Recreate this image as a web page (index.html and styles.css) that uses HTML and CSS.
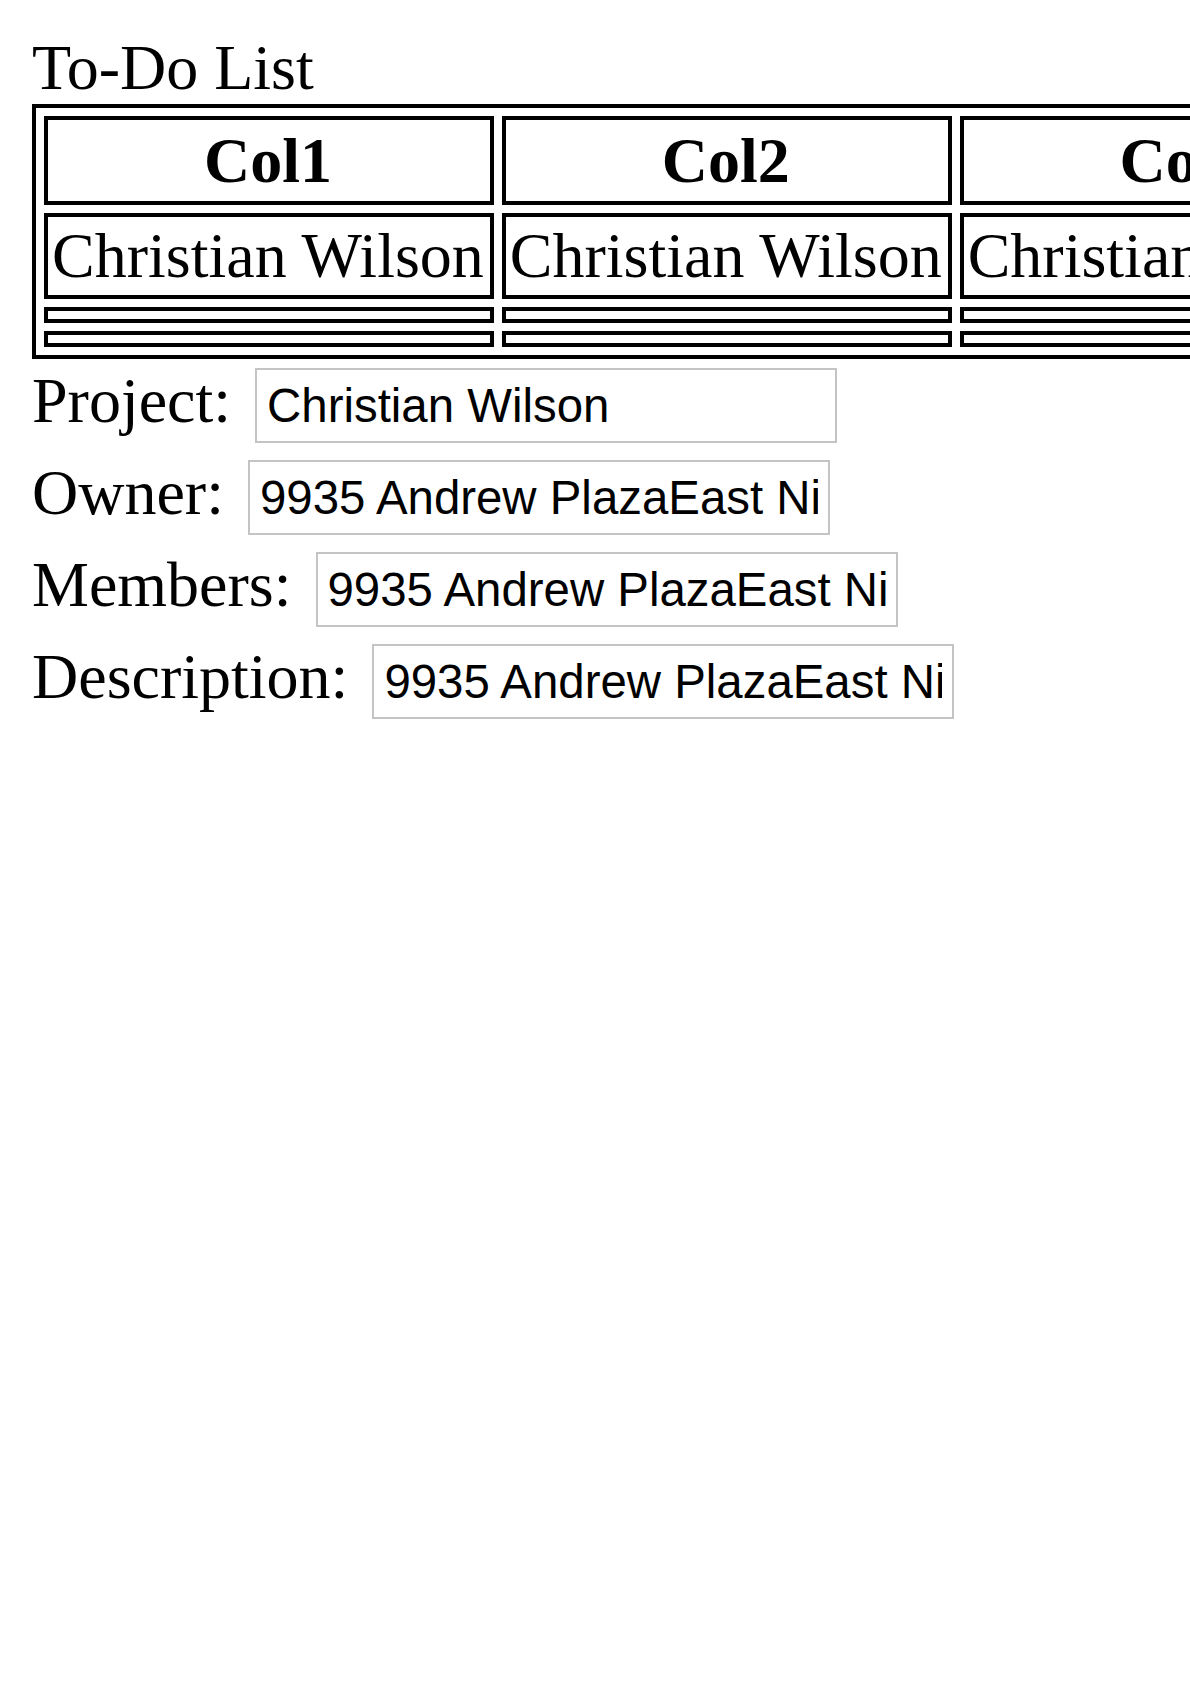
FILE: index.html
```html
<!DOCTYPE html>
<html lang="en">
<head>
<meta charset="utf-8">
<title>To-Do List</title>
<link rel="stylesheet" href="styles.css">
</head>
<body>
<div class="page">
  <div class="title">To-Do List</div>
  <table class="grid">
    <tr>
      <th>Col1</th>
      <th>Col2</th>
      <th>Col3</th>
    </tr>
    <tr>
      <td>Christian Wilson</td>
      <td>Christian Wilson</td>
      <td>Christian Wilson</td>
    </tr>
    <tr class="empty">
      <td></td>
      <td></td>
      <td></td>
    </tr>
    <tr class="empty">
      <td></td>
      <td></td>
      <td></td>
    </tr>
  </table>
  <div class="row">
    <label class="lbl" for="project">Project:</label>
    <input class="field" id="project" type="text" value="Christian Wilson">
  </div>
  <div class="row">
    <label class="lbl" for="owner">Owner:</label>
    <input class="field" id="owner" type="text" value="9935 Andrew PlazaEast Nicoleview, WA 20435">
  </div>
  <div class="row">
    <label class="lbl" for="members">Members:</label>
    <input class="field" id="members" type="text" value="9935 Andrew PlazaEast Nicoleview, WA 20435">
  </div>
  <div class="row">
    <label class="lbl" for="description">Description:</label>
    <input class="field" id="description" type="text" value="9935 Andrew PlazaEast Nicoleview, WA 20435">
  </div>
</div>
</body>
</html>
```
FILE: styles.css
```css
html {
  background: #ffffff;
}

body {
  margin: 32px 0 0 32px;
  font-family: "Liberation Serif", "Times New Roman", serif;
  font-size: 64px;
  color: #000000;
}

.page {
  overflow: hidden;
}

.title {
  line-height: 72px;
}

.grid {
  border: 4px solid #000000;
  border-spacing: 8px;
  border-collapse: separate;
  white-space: nowrap;
  margin-bottom: 1px;
}

.grid th,
.grid td {
  border: 4px solid #000000;
  padding: 4px 6px 4px 4px;
  font-size: 64px;
}

.grid th {
  font-weight: bold;
  text-align: center;
  line-height: 73px;
}

.grid td {
  text-align: left;
  line-height: 70px;
}

.row {
  display: flex;
  align-items: baseline;
  gap: 24px;
  white-space: nowrap;
}

.lbl {
  line-height: normal;
}

.field {
  box-sizing: border-box;
  width: 582px;
  height: 75px;
  margin: 8px 0 9px;
  padding: 8px 10px;
  border: 2px solid #c4c4c4;
  border-radius: 0;
  font-family: "Liberation Sans", Arial, sans-serif;
  font-size: 47.4px;
  color: #000000;
  background: #ffffff;
  outline: none;
}
```
